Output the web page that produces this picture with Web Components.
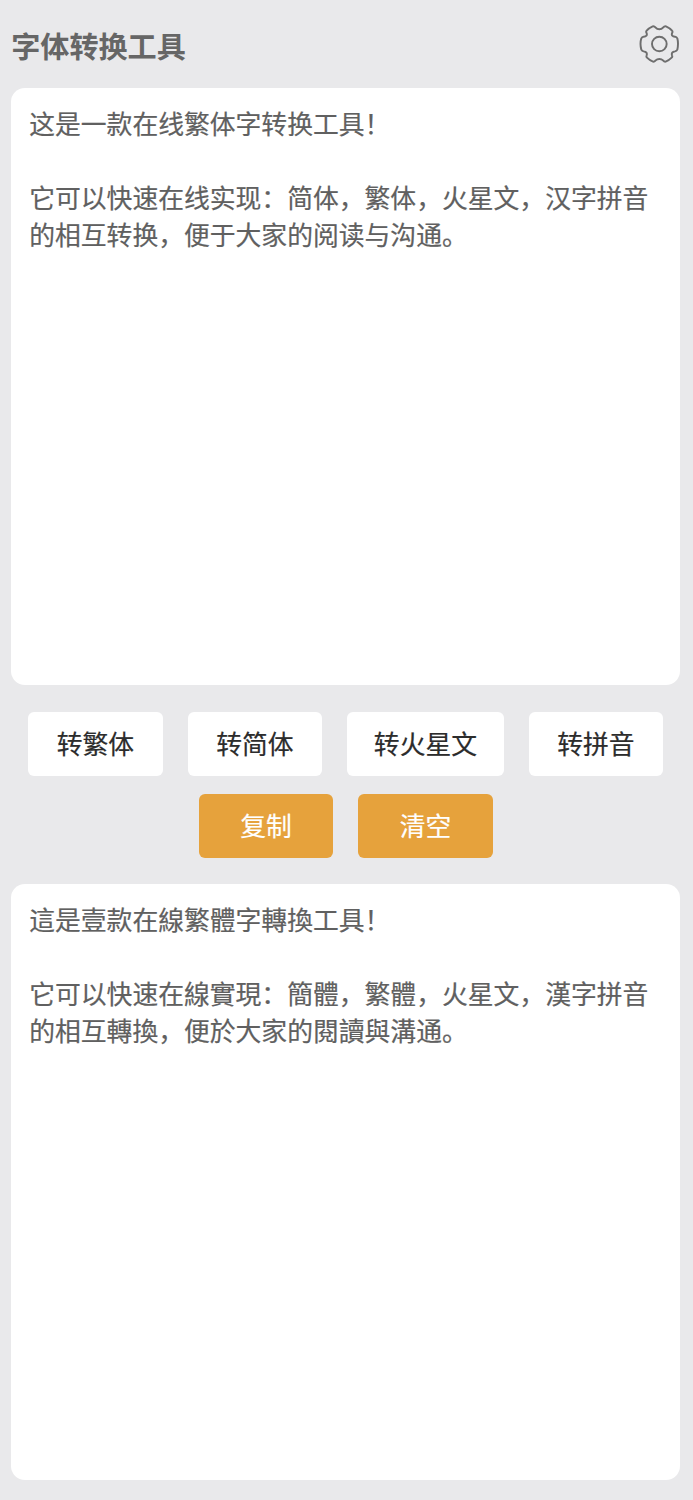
<!DOCTYPE html>
<html lang="zh-CN">
<head>
<meta charset="utf-8">
<title>字体转换工具</title>
<style>
html, body { margin: 0; background: #e9e9eb; }
body { font-family: "Noto Sans CJK SC", sans-serif; color: #606266; }
</style>
</head>
<body>
<converter-app></converter-app>
<script>
const define = (name, html) => {
  const template = document.createElement('template');
  template.innerHTML = html;
  customElements.define(name, class extends HTMLElement {
    constructor() {
      super();
      this.attachShadow({ mode: 'open' }).append(template.content.cloneNode(true));
    }
  });
};

define('gear-icon', `
<style>
:host { display: block; width: 40px; height: 40px; color: #6e6e6e; }
svg { display: block; }
</style>
<svg width="40" height="40" viewBox="0 0 120 120" fill="none" stroke="currentColor" stroke-width="5.8" stroke-linejoin="round">
<path d="M41 7Q46 6 50 11Q54 16 61 16Q68 16 72 11Q76 6 81 7Q92 12 99 20Q102 23 99 28Q96 37 108 38Q113 39 115 43Q119 59 115 77Q113 81 108 82Q96 84 99 94Q101 98 98 101Q90 109 80 113Q76 114 72 109Q68 105 61 105Q54 105 50 109Q46 114 42 113Q32 109 24 101Q21 98 23 94Q26 84 14 82Q9 81 7 77Q2 59 7 43Q9 39 14 38Q26 37 23 28Q20 23 23 20Q30 12 41 7Z"/>
<circle cx="61" cy="60" r="22"/>
</svg>`);

define('app-header', `
<style>
:host { display: flex; align-items: center; justify-content: space-between; height: 88.4px; box-sizing: border-box; padding-right: 1.5px; }
h1 { margin: 1px 0 0; font-size: 29.1px; line-height: 40px; font-weight: 700; color: #666; }
</style>
<h1><slot></slot></h1><gear-icon></gear-icon>`);

define('text-panel', `
<style>
:host { display: block; height: 596.2px; box-sizing: border-box; padding: 17px 18px 0; border-radius: 14px; background: #fff; color: #606060; font-size: 25.8px; line-height: 36.9px; -webkit-text-stroke: .2px currentColor; }
.content { white-space: pre-line; }
</style>
<div class="content"><slot></slot></div>`);

define('action-button', `
<style>
:host { display: block; }
button { display: block; min-width: 134.7px; height: 64px; padding: 0 26.8px; margin: 0; border: 0; border-radius: 6px; background: #fff; color: #2c2c2c; font: inherit; font-size: 25.8px; line-height: 62.6px; white-space: nowrap; -webkit-text-stroke: .2px currentColor; }
:host([primary]) button { background: #e6a23c; color: #fff; }
</style>
<button><slot></slot></button>`);

define('button-row', `
<style>
:host { display: flex; justify-content: center; gap: 24.8px; }
</style>
<slot></slot>`);

define('converter-app', `
<style>
:host { display: block; height: 1500px; box-sizing: border-box; padding: 0 12.8px 0 11.2px; overflow: hidden; }
.actions { display: flex; flex-direction: column; gap: 18px; padding: 27px 0 26.6px; }
</style>
<app-header>字体转换工具</app-header>
<text-panel>这是一款在线繁体字转换工具！

它可以快速在线实现：简体，繁体，火星文，汉字拼音的相互转换，便于大家的阅读与沟通。</text-panel>
<div class="actions">
<button-row><action-button>转繁体</action-button><action-button>转简体</action-button><action-button>转火星文</action-button><action-button>转拼音</action-button></button-row>
<button-row><action-button primary>复制</action-button><action-button primary>清空</action-button></button-row>
</div>
<text-panel>這是壹款在線繁體字轉換工具！

它可以快速在線實現：簡體，繁體，火星文，漢字拼音的相互轉換，便於大家的閱讀與溝通。</text-panel>`);
</script>
</body>
</html>
